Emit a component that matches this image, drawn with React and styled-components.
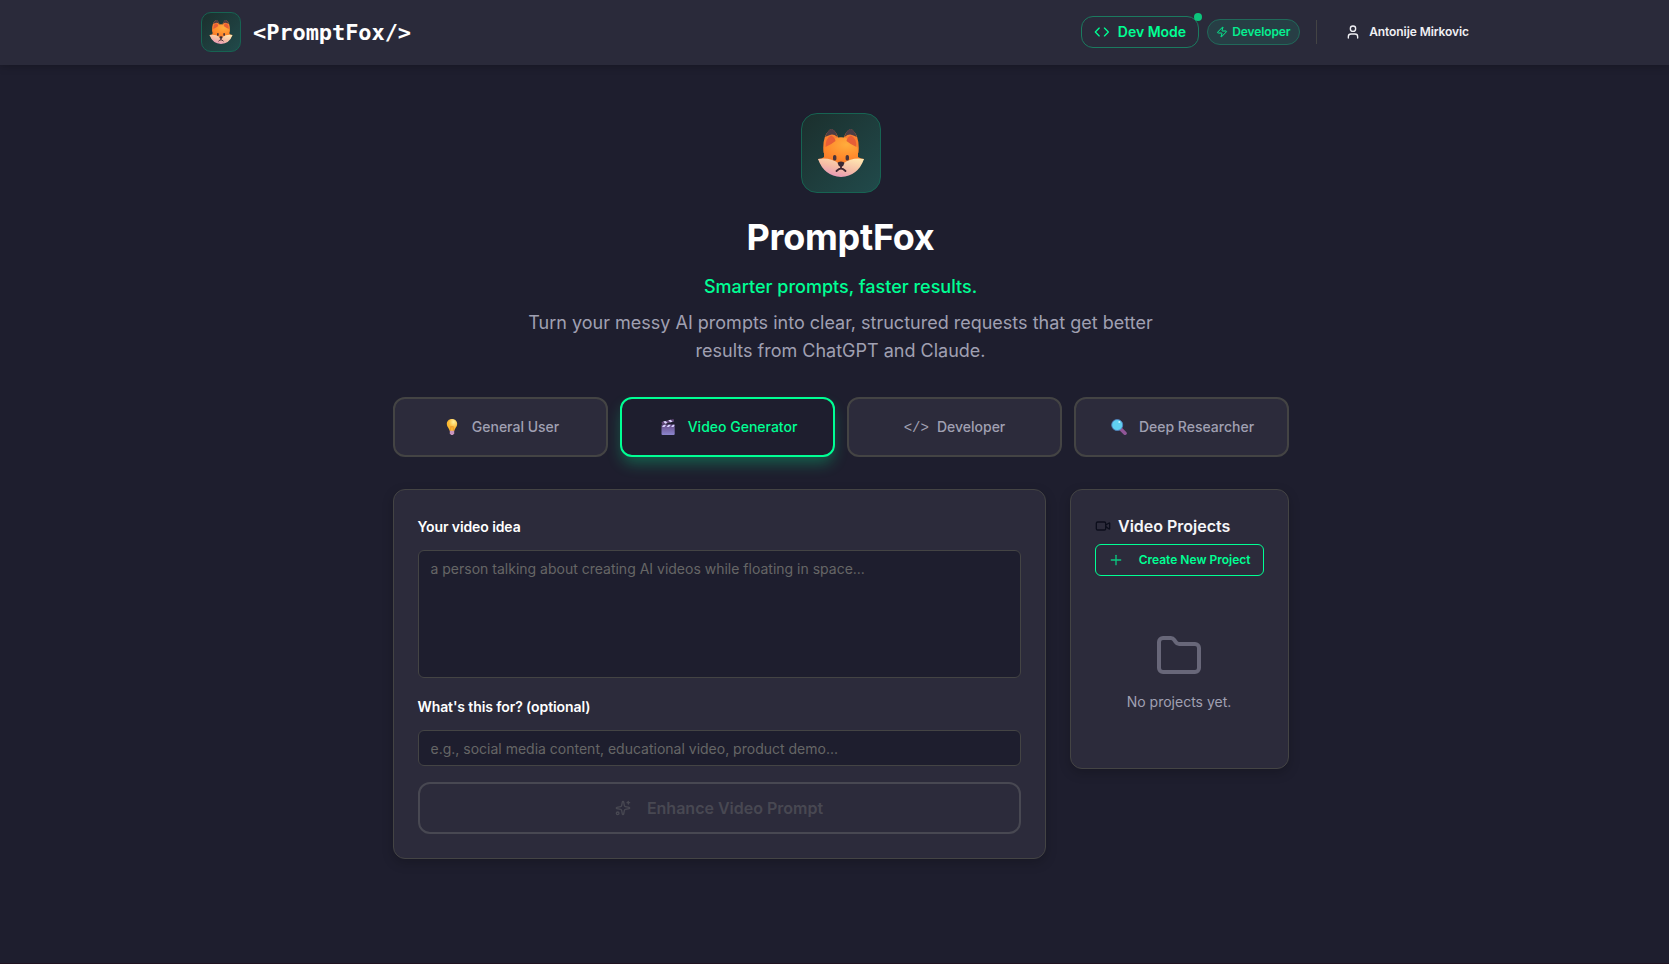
import React from 'react';
import styled, { createGlobalStyle, css } from 'styled-components';
import { Code, Zap, User, Video, Plus, Folder, Sparkles } from 'lucide-react';

const c = {
  bg: '#1e1e2e',
  panel: '#2c2b3b',
  line: '#444444',
  green: '#00ff94',
  muted: '#a0a0b2',
};

const GlobalStyle = createGlobalStyle`
  *, *::before, *::after { box-sizing: border-box; }
  html, body { margin: 0; background: ${c.bg}; }
  body { font-family: Inter, "Liberation Sans", sans-serif; color: #fff; overflow: hidden; }
  button, input, textarea { font-family: inherit; }
`;

const Page = styled.div`
  height: 964px;
  border-bottom: 1px solid #1f1220;
  background: ${c.bg};
`;
const Header = styled.header`
  height: 65px;
  padding-left: 13px;
  background: #2a2a3a;
  box-shadow: 0 1px 8px rgba(0, 0, 0, 0.25);
`;
const HeaderInner = styled.div`
  width: 1280px;
  height: 64px;
  margin: 0 auto;
  display: flex;
  align-items: center;
  justify-content: space-between;
`;
const Brand = styled.div`
  display: flex;
  align-items: center;
  gap: 12px;
`;
const BrandName = styled.span`
  padding-top: 2px;
  font: 700 22px/28px "DejaVu Sans Mono", monospace;
  letter-spacing: -0.08px;
`;
const LogoTile = styled.div`
  width: ${(p) => p.$size}px;
  height: ${(p) => p.$size}px;
  border-radius: ${(p) => p.$radius}px;
  border: 1px solid #176352;
  background: linear-gradient(135deg, #1b2f2d, #214a4b);
  display: flex;
  align-items: center;
  justify-content: center;
`;
const Actions = styled.div`
  display: flex;
  align-items: center;
`;
const DevMode = styled.button`
  position: relative;
  display: flex;
  align-items: center;
  gap: 8px;
  width: 118px;
  height: 32px;
  padding: 0 12px 1px;
  border: 1px solid #1b7a5f;
  border-radius: 12px;
  background: transparent;
  color: ${c.green};
  font-size: 14px;
  font-weight: 600;
  white-space: nowrap;
`;
const Dot = styled.i`
  position: absolute;
  top: -4px;
  right: -4px;
  width: 8px;
  height: 8px;
  border-radius: 50%;
  background: #0cc47c;
`;
const Role = styled.span`
  display: flex;
  align-items: center;
  gap: 4px;
  width: 93px;
  height: 26px;
  margin-left: 8px;
  padding: 0 8px 1px;
  border: 1px solid #21695a;
  border-radius: 13px;
  background: #273e45;
  color: #05ef90;
  font-size: 12px;
  font-weight: 600;
  letter-spacing: -0.1px;
`;
const Divider = styled.i`
  width: 1px;
  height: 24px;
  margin: 0 16px;
  background: ${c.line};
`;
const Account = styled.button`
  display: flex;
  align-items: center;
  gap: 8px;
  height: 32px;
  padding: 0 12px 1px;
  border: 0;
  background: transparent;
  color: #f0f0f4;
  font-size: 12px;
  font-weight: 600;
  letter-spacing: -0.08px;
  white-space: nowrap;
`;
const Main = styled.main`
  width: 908px;
  margin: 0 auto;
  padding: 48px 0 0 12px;
`;
const Hero = styled.section`
  display: flex;
  flex-direction: column;
  align-items: center;
  text-align: center;
`;
const Title = styled.h1`
  margin: 22px 0 0;
  font-size: 36px;
  line-height: 45px;
  font-weight: 700;
  letter-spacing: -0.28px;
`;
const Tagline = styled.p`
  margin: 13px 0 0;
  color: ${c.green};
  font-size: 18px;
  line-height: 28px;
  font-weight: 500;
`;
const Intro = styled.p`
  width: 672px;
  margin: 8px 0 0;
  color: ${c.muted};
  font-size: 18px;
  line-height: 28px;
`;
const Tabs = styled.nav`
  display: grid;
  grid-template-columns: repeat(4, 1fr);
  gap: 12px;
  margin-top: 32px;
`;
const Tab = styled.button`
  height: 60px;
  display: flex;
  align-items: center;
  justify-content: center;
  gap: ${(p) => p.$gap || 12}px;
  padding: 0 0 1px ${(p) => (p.$gap ? 1 : 3)}px;
  border: 2px solid ${c.line};
  border-radius: 12px;
  background: ${c.panel};
  color: ${c.muted};
  font-size: 14px;
  font-weight: 500;
  ${(p) => p.$active && css`
    border-color: ${c.green};
    background: ${c.bg};
    color: ${c.green};
    box-shadow: 0 8px 15px -2px rgba(0, 255, 148, 0.3);
  `}
  svg { margin-top: 1px; }
`;
const Tag = styled.span`
  padding-top: 2px;
  font: 500 14px/20px "Liberation Mono", monospace;
`;
const Columns = styled.div`
  display: grid;
  grid-template-columns: 653px 219px;
  align-items: start;
  gap: 24px;
  margin-top: 32px;
`;
const Card = styled.section`
  height: ${(p) => p.$height}px;
  display: flex;
  flex-direction: column;
  padding: 24px;
  border: 1px solid ${c.line};
  border-radius: 12px;
  background: ${c.panel};
  box-shadow: 0 4px 12px rgba(0, 0, 0, 0.2);
`;
const Label = styled.label`
  font-size: 14px;
  line-height: 20px;
  font-weight: 600;
  letter-spacing: -0.1px;
  margin: ${(p) => p.$top || 0}px 0 ${(p) => p.$bottom}px;
`;
const field = css`
  display: block;
  width: 100%;
  border: 1px solid ${c.line};
  border-radius: 6px;
  background: ${c.bg};
  color: #fff;
  font-size: 14px;
  line-height: 20px;
  outline: 0;
  resize: none;
  &::placeholder { color: #666; opacity: 1; }
`;
const TextArea = styled.textarea`
  ${field}
  height: 128px;
  padding: 8px 12px;
`;
const Input = styled.input`
  ${field}
  height: 36px;
  padding: 2px 12px;
`;
const Enhance = styled.button`
  height: 52px;
  margin-top: 16px;
  display: flex;
  align-items: center;
  justify-content: center;
  gap: 16px;
  border: 2px solid #484852;
  border-radius: 12px;
  background: transparent;
  color: #484852;
  font-size: 16px;
  font-weight: 600;
`;
const SideTitle = styled.h2`
  display: flex;
  align-items: center;
  gap: 7.5px;
  margin: 0;
  font-size: 16px;
  line-height: 24px;
  font-weight: 600;
  color: #f5f5f8;
  white-space: nowrap;
  svg { color: #0c0e1c; }
`;
const Create = styled.button`
  height: 32px;
  margin-top: 6px;
  display: flex;
  align-items: center;
  justify-content: space-between;
  padding: 0 12px 1px;
  border: 1px solid ${c.green};
  border-radius: 6px;
  background: transparent;
  color: ${c.green};
  font-size: 12px;
  font-weight: 600;
  white-space: nowrap;
  svg { color: #0bc880; }
`;
const Empty = styled.div`
  flex: 1;
  display: flex;
  flex-direction: column;
  align-items: center;
  padding-top: 56px;
  color: ${c.muted};
  font-size: 14px;
  line-height: 20px;
  svg { color: #686779; margin-bottom: 12px; }
`;

function Fox({ size }) {
  return (
    <svg width={size} height={size} viewBox="0 0 48 48" aria-hidden="true">
      <defs>
        <radialGradient id="foxHead" cx="0.62" cy="0.25" r="0.8">
          <stop offset="0" stopColor="#ffad3c" />
          <stop offset="0.55" stopColor="#ff8a2c" />
          <stop offset="1" stopColor="#f26f28" />
        </radialGradient>
        <linearGradient id="foxCheek" x1="0.8" y1="0" x2="0.2" y2="1">
          <stop offset="0" stopColor="#ffe5b0" />
          <stop offset="0.5" stopColor="#f5bda5" />
          <stop offset="1" stopColor="#e591ba" />
        </linearGradient>
      </defs>
      <path d="M6.5 24 Q5 8 12 1.5 Q14-1.5 17 1.5 Q21 5 21.5 12Z M41.5 24 Q43 8 36 1.5 Q34-1.5 31 1.5 Q27 5 26.5 12Z" fill="#fb802f" />
      <path d="M8 8 Q10 3 12 1.3 Q14.3-1.5 17 1.3 Q20 4 20.5 8 Q16 4.5 13 6 Q10 7 8 8Z M40 8 Q38 3 36 1.3 Q33.7-1.5 31 1.3 Q28 4 27.5 8 Q32 4.5 35 6 Q38 7 40 8Z" fill="#4c3d45" />
      <path d="M7 21 Q8 12 18 9.5 Q24 7 30 9.5 Q40 12 41 21 L41 28 Q44 30 47 30 L41 38 L7 38 L1 30 Q5 30 7 28Z" fill="url(#foxHead)" />
      <path d="M8.5 18 Q8.5 9 14 6.5 Q18 8 18.5 12 Q15 15 8.5 18Z M39.5 18 Q39.5 9 34 6.5 Q30 8 29.5 12 Q33 15 39.5 18Z" fill="#e75e36" />
      <path d="M1 30 Q13 28 21 34 Q24 36 27 34 Q35 28 47 30 Q41 47 24 48 Q7 47 1 30Z" fill="url(#foxCheek)" />
      <rect x="16" y="26" width="3.4" height="5.6" rx="1.7" fill="#49333a" />
      <rect x="28.6" y="26" width="3.4" height="5.6" rx="1.7" fill="#49333a" />
      <path d="M20.6 34 Q21 32.5 24 32.5 Q27 32.5 27.4 34 Q27 37 24 38 Q21 37 20.6 34Z" fill="#382832" />
      <path d="M24 37 V39.5 Q22 39.5 19.5 42 M24 39.5 Q26 39.5 28.5 42" fill="none" stroke="#402832" strokeWidth="1.8" strokeLinecap="round" />
    </svg>
  );
}

function Bulb() {
  return (
    <svg width="16" height="16" viewBox="0 0 16 16" aria-hidden="true">
      <defs><radialGradient id="bulb" cx="0.65" cy="0.25"><stop stopColor="#fff2a0" /><stop offset="1" stopColor="#fbb831" /></radialGradient></defs>
      <path d="M8 0C4.8 0 2.8 2.2 2.8 5c0 3 2.5 4.2 3 7h4.4c.5-2.8 3-4 3-7 0-2.8-2-5-5.2-5Z" fill="url(#bulb)" />
      <path d="M6.4 12 7 7.2l1 1 1-1 .6 4.8" fill="none" stroke="#e88d29" strokeWidth=".7" />
      <path d="M5.8 11.8h4.4v2.5L9 16H7l-1.2-1.7Z" fill="#c894bd" />
    </svg>
  );
}

function Clapper() {
  return (
    <svg width="16" height="16" viewBox="0 0 16 16" aria-hidden="true">
      <defs><linearGradient id="clap" x2="0" y2="1"><stop stopColor="#674c86" /><stop offset="1" stopColor="#8c86ce" /></linearGradient></defs>
      <path d="m1.5 3 12-3 .7 2.6L2.2 5.5Z" fill="#614677" />
      <path d="m3.3 2.6 2.2-.5 2 2-2.3.6Zm5-1.3 2.3-.6 2 2-2.4.5Z" fill="#ddd5ff" />
      <rect x="1.5" y="5.5" width="13.2" height="10.5" rx="1" fill="url(#clap)" />
      <path d="m2 8 1.8-2.2h2.4L4.4 8Zm4.6 0 1.8-2.2h2.4L9 8Zm4.5 0 1.8-2.2h1.8L13.5 8Z" fill="#d9d3ff" />
    </svg>
  );
}

function Magnifier() {
  return (
    <svg width="16" height="16" viewBox="0 0 16 16" aria-hidden="true">
      <path d="m9.7 10 4.3 4.2" stroke="#915697" strokeWidth="3.6" strokeLinecap="round" />
      <circle cx="6.2" cy="6" r="5.5" fill="#60d0f0" stroke="#5082bd" strokeWidth=".9" />
      <circle cx="8.3" cy="3" r="1" fill="#c8f6ff" />
    </svg>
  );
}

export default function App() {
  return (
    <Page>
      <GlobalStyle />
      <Header>
        <HeaderInner>
          <Brand>
            <LogoTile $size={40} $radius={10}><Fox size={24} /></LogoTile>
            <BrandName>&lt;PromptFox/&gt;</BrandName>
          </Brand>
          <Actions>
            <DevMode><Code size={16} />Dev Mode<Dot /></DevMode>
            <Role><Zap size={12} />Developer</Role>
            <Divider />
            <Account><User size={16} />Antonije Mirkovic</Account>
          </Actions>
        </HeaderInner>
      </Header>
      <Main>
        <Hero>
          <LogoTile $size={80} $radius={16}><Fox size={48} /></LogoTile>
          <Title>PromptFox</Title>
          <Tagline>Smarter prompts, faster results.</Tagline>
          <Intro>Turn your messy AI prompts into clear, structured requests that get better results from ChatGPT and Claude.</Intro>
        </Hero>
        <Tabs>
          <Tab><Bulb />General User</Tab>
          <Tab $active><Clapper />Video Generator</Tab>
          <Tab $gap={8}><Tag>&lt;/&gt;</Tag>Developer</Tab>
          <Tab><Magnifier />Deep Researcher</Tab>
        </Tabs>
        <Columns>
          <Card $height={370}>
            <Label htmlFor="idea" $top={3} $bottom={13}>Your video idea</Label>
            <TextArea id="idea" placeholder="a person talking about creating AI videos while floating in space..." />
            <Label htmlFor="purpose" $top={19} $bottom={13}>What's this for? (optional)</Label>
            <Input id="purpose" placeholder="e.g., social media content, educational video, product demo..." />
            <Enhance><Sparkles size={16} />Enhance Video Prompt</Enhance>
          </Card>
          <Card $height={280}>
            <SideTitle><Video size={16} />Video Projects</SideTitle>
            <Create><Plus size={16} />Create New Project</Create>
            <Empty><Folder size={48} />No projects yet.</Empty>
          </Card>
        </Columns>
      </Main>
    </Page>
  );
}
